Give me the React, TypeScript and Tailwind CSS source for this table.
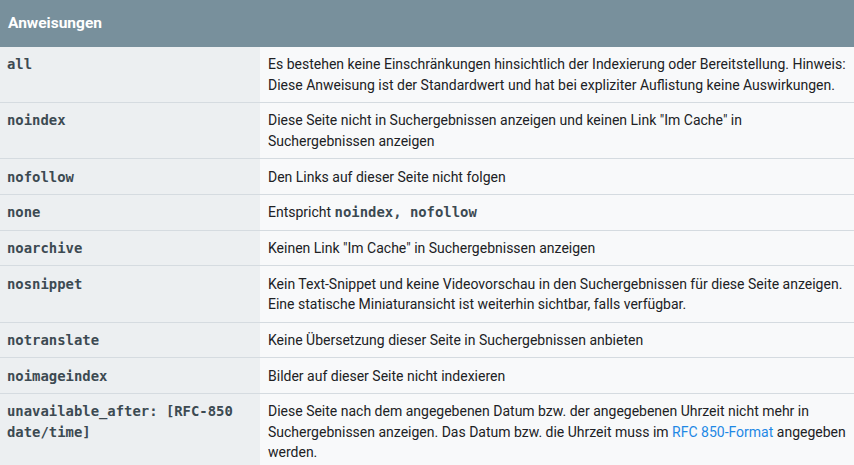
const rows: { key: string; desc: React.ReactNode }[] = [
  {
    key: "all",
    desc: "Es bestehen keine Einschränkungen hinsichtlich der Indexierung oder Bereitstellung. Hinweis: Diese Anweisung ist der Standardwert und hat bei expliziter Auflistung keine Auswirkungen.",
  },
  {
    key: "noindex",
    desc: 'Diese Seite nicht in Suchergebnissen anzeigen und keinen Link "Im Cache" in Suchergebnissen anzeigen',
  },
  { key: "nofollow", desc: "Den Links auf dieser Seite nicht folgen" },
  {
    key: "none",
    desc: (
      <>
        Entspricht{" "}
        <code className="font-['DejaVu_Sans_Mono',monospace] text-[13.9px] font-bold text-[#3c4a52]">
          noindex, nofollow
        </code>
      </>
    ),
  },
  { key: "noarchive", desc: 'Keinen Link "Im Cache" in Suchergebnissen anzeigen' },
  {
    key: "nosnippet",
    desc: "Kein Text-Snippet und keine Videovorschau in den Suchergebnissen für diese Seite anzeigen. Eine statische Miniaturansicht ist weiterhin sichtbar, falls verfügbar.",
  },
  { key: "notranslate", desc: "Keine Übersetzung dieser Seite in Suchergebnissen anbieten" },
  { key: "noimageindex", desc: "Bilder auf dieser Seite nicht indexieren" },
  {
    key: "unavailable_after: [RFC-850 date/time]",
    desc: (
      <>
        Diese Seite nach dem angegebenen Datum bzw. der angegebenen Uhrzeit nicht mehr in
        Suchergebnissen anzeigen. Das Datum bzw. die Uhrzeit muss im{" "}
        <a href="#" className="text-[#1e88e5]">
          RFC 850-Format
        </a>{" "}
        angegeben werden.
      </>
    ),
  },
];

export default function App() {
  return (
    <div className="w-[854px] h-[465px] overflow-hidden bg-white font-['Roboto',sans-serif] text-[14px] leading-[20.5px] text-[#202124]">
      <table className="w-full border-collapse">
        <thead>
          <tr className="bg-[#78909c]">
            <th
              colSpan={2}
              className="h-[47px] px-2 text-left text-[15.5px] font-bold text-white"
            >
              Anweisungen
            </th>
          </tr>
        </thead>
        <tbody>
          {rows.map((r) => (
            <tr key={r.key} className="border-b border-[#d5dbe0]">
              <td className="w-[260px] bg-[#eceff1] pl-[7px] pr-2 pt-[7.2px] pb-[7px] align-top font-['DejaVu_Sans_Mono',monospace] text-[13.9px] font-bold text-[#3c4a52]">
                {r.key}
              </td>
              <td className="bg-[#f8f9fa] px-2 pt-[7.2px] pb-[7px] align-top">{r.desc}</td>
            </tr>
          ))}
        </tbody>
      </table>
    </div>
  );
}
